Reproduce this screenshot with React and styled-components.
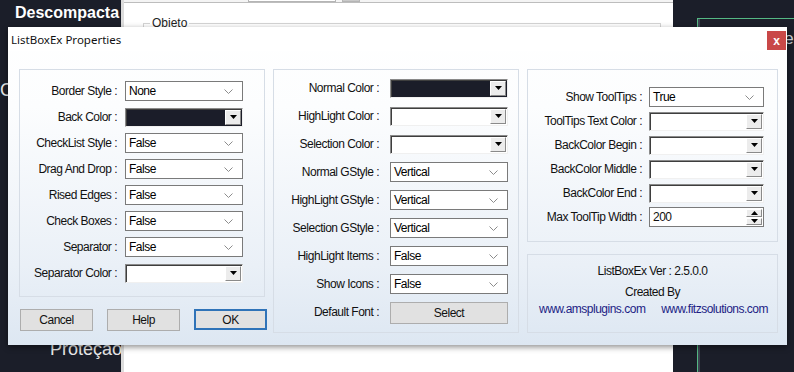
import React from 'react';
import styled, { createGlobalStyle } from 'styled-components';

const GlobalStyle = createGlobalStyle`
  html, body {
    margin: 0;
    padding: 0;
  }
  body {
    width: 794px;
    height: 372px;
    overflow: hidden;
    background: #1c1f2a;
    font-family: "Liberation Sans", Arial, sans-serif;
  }
`;

// Background (the app behind the dialog)
const Desktop = styled.div`
  position: relative;
  width: 794px;
  height: 372px;
  display: grid;
  grid-template-columns: 121px 552px 1fr;
  overflow: hidden;
`;

const Sidebar = styled.div`
  background: #1b1e29;
  display: flex;
  flex-direction: column;
  overflow: hidden;
`;

const SideTitle = styled.div`
  color: #fff;
  font-weight: bold;
  font-size: 16px;
  padding: 4px 0 0 15px;
  white-space: nowrap;
`;

const SideItem = styled.div`
  color: #e8e8e8;
  font-size: 18px;
  white-space: nowrap;
  padding-left: ${p => p.$indent}px;
  margin-top: ${p => p.$top};
  padding-bottom: ${p => p.$bottom || 0}px;
`;

const AppArea = styled.div`
  background: #fff;
  border-left: 3px solid #dcdcdc;
  display: flex;
  flex-direction: column;
`;

const TabStrip = styled.div`
  height: 2px;
  display: flex;
  gap: 6px;
  padding-left: 124px;
  border-bottom: 1px solid #bdbdbd;
  background: #f4f4f4;
`;

const TabStub = styled.div`
  width: ${p => p.$w}px;
  border: 1px solid #b5b5b5;
  border-top: none;
  background: ${p => p.$fill || '#fff'};
`;

const GroupBox = styled.fieldset`
  margin: 13px 12px 0 19px;
  border: 1px solid #d4d4d4;
  border-bottom: none;
  padding: 0;
  height: 60px;

  legend {
    font-size: 12px;
    color: #222;
    padding: 0 2px;
    margin-left: 6px;
  }
`;

const DarkRight = styled.div`
  background: #1b1e29;
  padding: 18px 0 0 24px;
  display: flex;
`;

const GreenFrame = styled.div`
  flex: 1;
  border-top: 1px solid #55b884;
  border-left: 1px solid #55b884;
  box-shadow: inset 2px 0 0 #3c4250;
`;

const PeekText = styled.div`
  color: #c8ccd4;
  font-size: 17px;
  margin: 10px 0 0 74px;
`;

// Dialog
const Dialog = styled.div`
  position: absolute;
  left: 8px;
  top: 27px;
  width: 779px;
  height: 318px;
  background: linear-gradient(#ffffff 0%, #fcfdfe 25%, #eaf0f7 75%, #dde7f2 100%);
  box-shadow: 0 2px 6px rgba(0, 0, 0, 0.45);
  display: flex;
  flex-direction: column;
  font-size: 12px;
  letter-spacing: -0.5px;
  color: #111;
`;

const TitleBar = styled.div`
  height: 24px;
  display: flex;
  align-items: center;
  justify-content: space-between;
  padding: 0 1px 0 3px;
  background: #fff;
`;

const Title = styled.div`
  font-family: "Noto Sans", "Open Sans", sans-serif;
  font-size: 11.5px;
  letter-spacing: 0;
  margin-top: 1px;
`;

const CloseButton = styled.div`
  width: 19px;
  height: 19px;
  margin-top: 3px;
  background: #c94848;
  color: #fff;
  font-weight: bold;
  font-size: 12px;
  letter-spacing: 0;
  display: flex;
  align-items: center;
  justify-content: center;
`;

const Body = styled.div`
  flex: 1;
  display: grid;
  grid-template-columns: 246px 246px 251px;
  column-gap: 8px;
  padding: 18px 10px 0 11px;
`;

const Column = styled.div`
  display: flex;
  flex-direction: column;
  gap: 12px;
`;

const Panel = styled.div`
  border: 1px solid #d6dde6;
  height: ${p => p.$h}px;
  box-sizing: border-box;
  display: grid;
  grid-template-columns: ${p => p.$label}px ${p => p.$field}px;
  grid-auto-rows: 20px;
  column-gap: ${p => p.$gap}px;
  row-gap: ${p => p.$rowGap}px;
  padding-top: ${p => p.$top}px;
  align-content: start;
`;

const Label = styled.div`
  text-align: right;
  white-space: nowrap;
  align-self: center;
`;

const Combo = styled.div`
  border: 1px solid #7a7a7a;
  background: #fff;
  display: flex;
  align-items: center;
  justify-content: space-between;
  padding: 0 9px 0 3px;
  color: #000;
`;

const ColorCombo = styled.div`
  height: 19px;
  align-self: center;
  border: 1px solid;
  border-color: #8a8a8a #f0f0f0 #f0f0f0 #8a8a8a;
  box-shadow: inset 1px 1px 0 #3e3e3e;
  background: ${p => p.$color};
  display: flex;
  justify-content: flex-end;
  padding: 1px 1px 1px 2px;
  box-sizing: border-box;
`;

const DropButton = styled.div`
  width: 16px;
  box-sizing: border-box;
  background: #ececec;
  border: 1px solid;
  border-color: #fff #8a8a8a #8a8a8a #fff;
  display: flex;
  align-items: center;
  justify-content: center;
`;

const SpinBox = styled.div`
  border: 1px solid #7a7a7a;
  background: #fff;
  display: flex;
  justify-content: space-between;
  padding: 1px 1px 1px 3px;
  line-height: 16px;
`;

const SpinButtons = styled.div`
  display: flex;
  flex-direction: column;
  gap: 1px;
`;

const SpinButton = styled(DropButton)`
  flex: 1;
  height: 8px;
`;

const FormButton = styled.button`
  box-sizing: border-box;
  height: 22px;
  font-family: inherit;
  font-size: 12px;
  letter-spacing: -0.5px;
  color: #111;
  background: #e1e1e1;
  border: 1px solid #adadad;
  padding: 0;
`;

const ButtonRow = styled.div`
  display: grid;
  grid-template-columns: 73px 73px 73px;
  column-gap: 14px;
  padding-left: 1px;
`;

const OkButton = styled(FormButton)`
  border: 2px solid #2f73b8;
  height: 21px;
`;

const InfoPanel = styled.div`
  border: 1px solid #d6dde6;
  height: 79px;
  box-sizing: border-box;
  display: flex;
  flex-direction: column;
  align-items: center;
  padding-top: 9px;
`;

const InfoLine = styled.div`
  margin-bottom: ${p => p.$mb}px;
`;

const Links = styled.div`
  align-self: stretch;
  display: flex;
  justify-content: space-between;
  padding: 0 9px 0 11px;
  color: #1d1d85;
`;

const Triangle = ({ up }) => (
  <svg width="7" height="4" viewBox="0 0 7 4">
    <polygon points={up ? '0,4 7,4 3.5,0' : '0,0 7,0 3.5,4'} fill="#000" />
  </svg>
);

const Chevron = () => (
  <svg width="9" height="5" viewBox="0 0 9 5">
    <polyline points="0.5,0.5 4.5,4.5 8.5,0.5" fill="none" stroke="#8c8c8c" strokeWidth="1" />
  </svg>
);

const Field = ({ row }) => {
  if (row.type === 'color') {
    return (
      <ColorCombo $color={row.color || '#fff'}>
        <DropButton><Triangle /></DropButton>
      </ColorCombo>
    );
  }
  if (row.type === 'spin') {
    return (
      <SpinBox>
        <span>{row.value}</span>
        <SpinButtons>
          <SpinButton><Triangle up /></SpinButton>
          <SpinButton><Triangle /></SpinButton>
        </SpinButtons>
      </SpinBox>
    );
  }
  if (row.type === 'button') {
    return <FormButton>{row.value}</FormButton>;
  }
  return (
    <Combo>
      <span>{row.value}</span>
      <Chevron />
    </Combo>
  );
};

const leftRows = [
  { label: 'Border Style :', value: 'None' },
  { label: 'Back Color :', type: 'color', color: '#1b1d29' },
  { label: 'CheckList Style :', value: 'False' },
  { label: 'Drag And Drop :', value: 'False' },
  { label: 'Rised Edges :', value: 'False' },
  { label: 'Check Boxes :', value: 'False' },
  { label: 'Separator :', value: 'False' },
  { label: 'Separator Color :', type: 'color' },
];

const middleRows = [
  { label: 'Normal Color :', type: 'color', color: '#1b1d29' },
  { label: 'HighLight Color :', type: 'color' },
  { label: 'Selection Color :', type: 'color' },
  { label: 'Normal GStyle :', value: 'Vertical' },
  { label: 'HighLight GStyle :', value: 'Vertical' },
  { label: 'Selection GStyle :', value: 'Vertical' },
  { label: 'HighLight Items :', value: 'False' },
  { label: 'Show Icons :', value: 'False' },
  { label: 'Default Font :', type: 'button', value: 'Select' },
];

const rightRows = [
  { label: 'Show ToolTips :', value: 'True' },
  { label: 'ToolTips Text Color :', type: 'color' },
  { label: 'BackColor Begin :', type: 'color' },
  { label: 'BackColor Middle :', type: 'color' },
  { label: 'BackColor End :', type: 'color' },
  { label: 'Max ToolTip Width :', type: 'spin', value: '200' },
];

const Rows = ({ rows }) =>
  rows.map(row => (
    <React.Fragment key={row.label}>
      <Label>{row.label}</Label>
      <Field row={row} />
    </React.Fragment>
  ));

export default function App() {
  return (
    <>
      <GlobalStyle />
      <Desktop>
        <Sidebar>
          <SideTitle>Descompacta</SideTitle>
          <SideItem $indent={0} $top="58px">Conteúdo</SideItem>
          <SideItem $indent={50} $top="auto" $bottom={12}>Proteção</SideItem>
        </Sidebar>
        <AppArea>
          <TabStrip>
            <TabStub $w={86} />
            <TabStub $w={16} $fill="#c9c9c9" />
          </TabStrip>
          <GroupBox>
            <legend>Objeto</legend>
          </GroupBox>
        </AppArea>
        <DarkRight>
          <GreenFrame>
            <PeekText>Res</PeekText>
          </GreenFrame>
        </DarkRight>

        <Dialog>
          <TitleBar>
            <Title>ListBoxEx Properties</Title>
            <CloseButton>x</CloseButton>
          </TitleBar>
          <Body>
            <Column>
              <Panel $h={228} $label={97} $field={118} $gap={8} $rowGap={6} $top={11}>
                <Rows rows={leftRows} />
              </Panel>
              <ButtonRow>
                <FormButton>Cancel</FormButton>
                <FormButton>Help</FormButton>
                <OkButton>OK</OkButton>
              </ButtonRow>
            </Column>
            <Column>
              <Panel $h={264} $label={105} $field={118} $gap={11} $rowGap={8} $top={8}>
                <Rows rows={middleRows} />
              </Panel>
            </Column>
            <Column>
              <Panel $h={173} $label={114} $field={115} $gap={7} $rowGap={4} $top={17}>
                <Rows rows={rightRows} />
              </Panel>
              <InfoPanel>
                <InfoLine $mb={7}>ListBoxEx Ver : 2.5.0.0</InfoLine>
                <InfoLine $mb={3}>Created By</InfoLine>
                <Links>
                  <span>www.amsplugins.com</span>
                  <span>www.fitzsolutions.com</span>
                </Links>
              </InfoPanel>
            </Column>
          </Body>
        </Dialog>
      </Desktop>
    </>
  );
}
